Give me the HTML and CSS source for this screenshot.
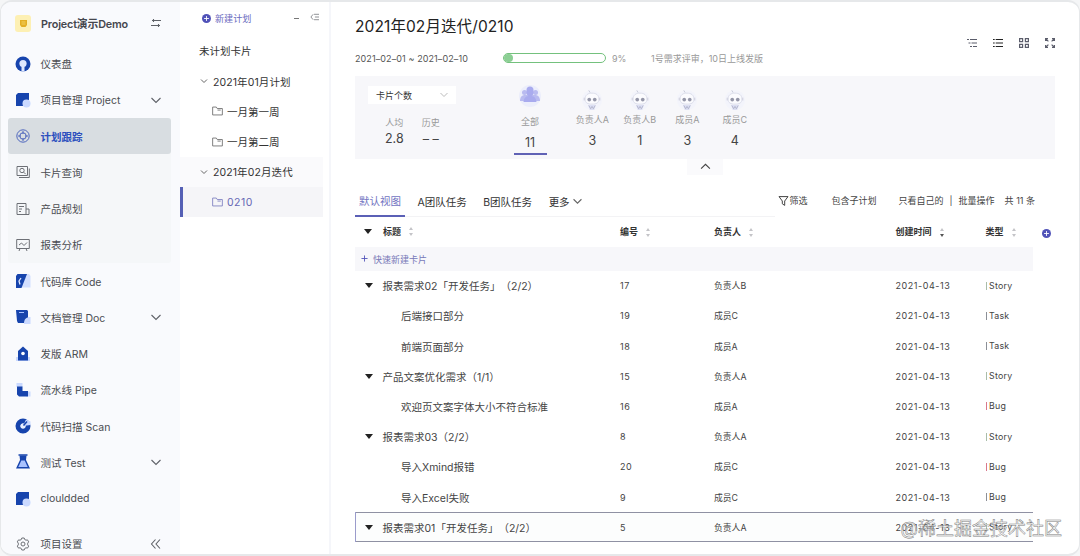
FILE: index.html
```html
<!DOCTYPE html>
<html lang="zh-CN">
<head>
    <meta charset="UTF-8">
    <meta name="viewport" content="width=device-width, initial-scale=1.0">
    <title>Project演示Demo</title>
    <link rel="stylesheet" href="styles.css">
</head>
<body>
    <div class="app">
        <aside class="sidebar">
            <div class="project">
                <span class="project-logo"><svg width="7" height="7" viewBox="0 0 7 7"><path d="M0 0h7v5L5.500 7h-4L0 5z" fill="#e3ae22"/><path d="M1.500 2h4M1.500 4h4" stroke="#f8db70" stroke-width=".8"/></svg></span>
                <span class="grow">Project演示Demo</span>
                <svg class="arrow" viewBox="0 0 12 12"><path d="M11 3.500H2M3.500 2v3M1 8.500h9M8.500 7v3"/></svg>
            </div>
            <nav>
                <a class="item">
                    <svg class="icon" viewBox="0 0 16 16"><circle cx="8" cy="8" r="7.500" fill="#1744ad"/><circle cx="8" cy="7.500" r="3.600" fill="#dfe8ff"/><path d="M6.500 8h3v7.500h-3z" fill="#dfe8ff"/></svg>
                    <span class="grow">仪表盘</span>
                </a>
                <a class="item">
                    <svg class="icon" viewBox="0 0 16 16"><path d="M3 1h11v13H1V3z" fill="#1744ad"/><circle cx="11.500" cy="11.500" r="4" fill="#cad9ff"/></svg>
                    <span class="grow">项目管理 Project</span>
                    <svg class="arrow" viewBox="0 0 12 12"><path d="M1.500 4L6 8.500 10.500 4"/></svg>
                </a>
                <div class="submenu">
                    <a class="item active">
                        <svg class="icon line" viewBox="0 0 16 16"><circle cx="8" cy="8" r="6.200"/><circle cx="8" cy="8" r="3.200"/><path d="M8 3v3M8 10v3M3 8h3M10 8h3"/></svg>
                        <span class="grow">计划跟踪</span>
                    </a>
                    <a class="item">
                        <svg class="icon line" viewBox="0 0 16 16"><path d="M2 2.500h10.500v9H2zM4 13.500h10.300V4.500"/><circle cx="7" cy="6.500" r="2.200"/><path d="M8.700 8.200l2 2"/></svg>
                        <span class="grow">卡片查询</span>
                    </a>
                    <a class="item">
                        <svg class="icon line" viewBox="0 0 16 16"><path d="M2 2.500h9v11H2zM11 8h3v5.500h-3M4 5.500h5M4 8h3M4 10.500h2"/></svg>
                        <span class="grow">产品规划</span>
                    </a>
                    <a class="item">
                        <svg class="icon line" viewBox="0 0 16 16"><path d="M1.700 2.500h12.600v9H1.700zM4 8l2.500-2 2.500 2.500L12 5.500M5 11.500l-1 2.500M11 11.500l1 2.500"/></svg>
                        <span class="grow">报表分析</span>
                    </a>
                </div>
                <a class="item">
                    <svg class="icon" viewBox="0 0 16 16"><path d="M9 1h5l1.500 2v11.500H5z" fill="#d3dfff"/><path d="M2.500 1H12L6.500 15H1V3z" fill="#1744ad"/><path d="M6 5L4 8l1 3.500" fill="none" stroke="#dfe8ff" stroke-width="1.300"/></svg>
                    <span class="grow">代码库 Code</span>
                </a>
                <a class="item">
                    <svg class="icon" viewBox="0 0 16 16"><path d="M1 1h11l1 1v8l-4 4H3l-1-2z" fill="#1744ad"/><path d="M4 3.500h5" stroke="#a9c2ff"/><path d="M9 15c0-5 2-7 6.500-7v7z" fill="#cad9ff"/></svg>
                    <span class="grow">文档管理 Doc</span>
                    <svg class="arrow" viewBox="0 0 12 12"><path d="M1.500 4L6 8.500 10.500 4"/></svg>
                </a>
                <a class="item">
                    <svg class="icon" viewBox="0 0 16 16"><path d="M1 11h14v4H1z" fill="#cad9ff"/><path d="M8 .5l5 4.500v9.500H3V5z" fill="#1744ad"/><circle cx="8" cy="7.500" r="1.800" fill="#fff"/></svg>
                    <span class="grow">发版 ARM</span>
                </a>
                <a class="item">
                    <svg class="icon" viewBox="0 0 16 16"><path d="M1.500 1h6v4h-6zM11 9.500h4.500v5H11z" fill="#cad9ff"/><path d="M2 4.500h5.500V9H13v5.500H4l-2-2z" fill="#1744ad"/></svg>
                    <span class="grow">流水线 Pipe</span>
                </a>
                <a class="item">
                    <svg class="icon" viewBox="0 0 16 16"><circle cx="8" cy="8" r="5" fill="none" stroke="#1744ad" stroke-width="5"/><circle cx="8" cy="8" r="2.500" fill="#e8efff"/><path d="M8 8l3-6.500 4.500 2v3.500z" fill="#cad9ff"/><path d="M8.500 7.500l3.500-4" stroke="#1744ad" stroke-width="1.500"/></svg>
                    <span class="grow">代码扫描 Scan</span>
                </a>
                <a class="item">
                    <svg class="icon" viewBox="0 0 16 16"><path d="M4.500 1.500h7L11 6l4 8.500H1L5 6z" fill="#1744ad"/><path d="M6.300 6.500h3.400l3 6.500H3.300z" fill="#a9c2ff"/><path d="M3.500 1h9" stroke="#1744ad" stroke-width="1.500"/></svg>
                    <span class="grow">测试 Test</span>
                    <svg class="arrow" viewBox="0 0 12 12"><path d="M1.500 4L6 8.500 10.500 4"/></svg>
                </a>
                <a class="item">
                    <svg class="icon" viewBox="0 0 16 16"><path d="M3 1h11v13H1V3z" fill="#1744ad"/><circle cx="11.500" cy="11.500" r="4" fill="#cad9ff"/></svg>
                    <span class="grow">clouldded</span>
                </a>
            </nav>
            <div class="item settings">
                <svg class="icon line" viewBox="0 0 16 16"><path d="M6.800 2h2.400l.5 1.500 1.300.7 1.500-.3 1.200 2-1 1.200v1.800l1 1.200-1.200 2-1.500-.3-1.300.7-.5 1.500H6.800l-.5-1.500-1.300-.7-1.500.3-1.200-2 1-1.200V7.100l-1-1.200 1.200-2 1.500.3 1.300-.7z"/><circle cx="8" cy="8" r="2"/></svg>
                <span class="grow">项目设置</span>
                <svg class="arrow" viewBox="0 0 12 12"><path d="M5.500 1.500L1.500 6l4 4.500M10 1.500L6 6l4 4.500"/></svg>
            </div>
        </aside>

        <section class="plans">
            <div class="plans-head">
                <svg class="plus" viewBox="0 0 10 10"><circle cx="5" cy="5" r="5"/><path d="M5 2.300v5.400M2.300 5h5.400"/></svg>
                <span class="grow">新建计划</span>
                <span class="minus"></span>
                <svg class="fold" viewBox="0 0 10 8"><path d="M3.500 1L1 4l2.500 3M4.500 1H10M5.500 4H10M4.500 7H10"/></svg>
            </div>
            <div class="plan root">未计划卡片</div>
            <div class="plan">
                <svg class="caret" viewBox="0 0 8 8"><path d="M1 2.500l3 3 3-3"/></svg>2021年01月计划
            </div>
            <div class="plan child">
                <svg class="folder" viewBox="0 0 12 10"><path d="M.7.700h4l1 1.600h5.600v7H.7zM6 4h3.500"/></svg>一月第一周
            </div>
            <div class="plan child">
                <svg class="folder" viewBox="0 0 12 10"><path d="M.7.700h4l1 1.600h5.600v7H.7zM6 4h3.500"/></svg>一月第二周
            </div>
            <div class="plan open">
                <svg class="caret" viewBox="0 0 8 8"><path d="M1 2.500l3 3 3-3"/></svg>2021年02月迭代
            </div>
            <div class="plan child selected">
                <svg class="folder" viewBox="0 0 12 10"><path d="M.7.700h4l1 1.600h5.600v7H.7zM6 4h3.500"/></svg>0210
            </div>
        </section>

        <main class="main">
            <header class="top">
                <div>
                    <h1>2021年02月迭代/0210</h1>
                    <div class="meta">
                        <span class="dates">2021–02–01 ~ 2021–02–10</span>
                        <span class="progress"><span class="bar" style="width: 9%"></span></span>
                        <span class="percent">9%</span>
                        <span class="note">1号需求评审，10日上线发版</span>
                    </div>
                </div>
                <div class="views">
                    <svg viewBox="0 0 10 10"><path d="M0 1.500h2M3 1.500h7M1.500 5h2M4.500 5H10M3 8.500h2M6 8.500h4"/></svg>
                    <svg class="dark" viewBox="0 0 10 10"><path d="M0 1.500h1.700M2.700 1.500H10M0 5h1.700M2.700 5H10M0 8.500h1.700M2.700 8.500H10"/></svg>
                    <svg viewBox="0 0 10 10"><path d="M.6.600h3v3h-3zM6.400.600h3v3h-3zM.6 6.400h3v3h-3zM6.400 6.400h3v3h-3z"/></svg>
                    <svg viewBox="0 0 10 10"><path d="M.6 3V.6H3M.8.800l2.600 2.600M7 .6h2.400V3M9.200.800L6.600 3.400M.6 7v2.400H3M.8 9.200l2.600-2.600M7 9.400h2.400V7M9.200 9.200L6.600 6.600"/></svg>
                </div>
            </header>

            <section class="stats">
                <div class="summary">
                    <div class="select">卡片个数<svg class="caret" viewBox="0 0 8 8"><path d="M.5 2L4 5.500 7.500 2"/></svg></div>
                    <div class="averages">
                        <div><span>人均</span><b>2.8</b></div>
                        <div><span>历史</span><b>– –</b></div>
                    </div>
                </div>
                <div class="member all">
                    <svg viewBox="0 0 24 24"><circle cx="12" cy="12" r="11" fill="#eceefb"/><g fill="#b9bbf0"><circle cx="6.500" cy="8.500" r="2.500"/><circle cx="17.500" cy="8.500" r="2.500"/><path d="M2 17c0-4 2-6 5-6h10c3 0 5 2 5 6z"/></g><path d="M8.500 6a3.500 3.500 0 0 1 7 0v3a3.500 3.500 0 0 1-2 3c3 .5 4.500 2 5 6h-13c.5-4 2-5.500 5-6a3.500 3.500 0 0 1-2-3z" fill="#a9abee"/></svg>
                    <span>全部</span><b>11</b>
                </div>
                <div class="member">
                    <svg viewBox="0 0 24 24"><use href="#robot"/></svg>
                    <span>负责人A</span><b>3</b>
                </div>
                <div class="member">
                    <svg viewBox="0 0 24 24"><use href="#robot"/></svg>
                    <span>负责人B</span><b>1</b>
                </div>
                <div class="member">
                    <svg viewBox="0 0 24 24"><use href="#robot"/></svg>
                    <span>成员A</span><b>3</b>
                </div>
                <div class="member">
                    <svg viewBox="0 0 24 24"><use href="#robot"/></svg>
                    <span>成员C</span><b>4</b>
                </div>
            </section>
            <div class="collapse"><svg viewBox="0 0 10 10"><path d="M1 7l4-4 4 4"/></svg></div>

            <div class="toolbar">
                <div class="tabs">
                    <a class="tab current">默认视图</a>
                    <a class="tab">A团队任务</a>
                    <a class="tab">B团队任务</a>
                    <a class="tab">更多<svg class="caret" viewBox="0 0 8 8"><path d="M.5 2L4 5.500 7.500 2"/></svg></a>
                </div>
                <div class="actions">
                    <span class="filter"><svg viewBox="0 0 10 10"><path d="M.5.600h9L6.200 5v4.400L3.800 7.800V5z"/></svg>筛选</span>
                    <span class="include">包含子计划</span>
                    <span class="mine">只看自己的</span>
                    <span class="split">|</span>
                    <span>批量操作</span>
                    <span class="total">共 11 条</span>
                </div>
            </div>

            <div class="table">
                <div class="row head">
                    <div class="title"><i class="tri"></i>标题<i class="sort"></i></div>
                    <div>编号<i class="sort"></i></div>
                    <div>负责人<i class="sort"></i></div>
                    <div>创建时间<i class="sort desc"></i></div>
                    <div>类型<i class="sort"></i></div>
                    <svg class="plus" viewBox="0 0 10 10"><circle cx="5" cy="5" r="5"/><path d="M5 2.300v5.400M2.300 5h5.400"/></svg>
                </div>
                <div class="quick"><svg viewBox="0 0 8 8"><path d="M4 .5v7M.5 4h7"/></svg>快速新建卡片</div>
                <div class="row">
                    <div class="title"><i class="tri"></i>报表需求02「开发任务」（2/2）</div>
                    <div class="num">17</div><div>负责人B</div><div class="date">2021-04-13</div><div class="type story">Story</div>
                </div>
                <div class="row">
                    <div class="title sub">后端接口部分</div>
                    <div class="num">19</div><div>成员C</div><div class="date">2021-04-13</div><div class="type task">Task</div>
                </div>
                <div class="row">
                    <div class="title sub">前端页面部分</div>
                    <div class="num">18</div><div>成员A</div><div class="date">2021-04-13</div><div class="type task">Task</div>
                </div>
                <div class="row">
                    <div class="title"><i class="tri"></i>产品文案优化需求（1/1）</div>
                    <div class="num">15</div><div>负责人A</div><div class="date">2021-04-13</div><div class="type story">Story</div>
                </div>
                <div class="row">
                    <div class="title sub">欢迎页文案字体大小不符合标准</div>
                    <div class="num">16</div><div>成员A</div><div class="date">2021-04-13</div><div class="type bug">Bug</div>
                </div>
                <div class="row">
                    <div class="title"><i class="tri"></i>报表需求03（2/2）</div>
                    <div class="num">8</div><div>负责人A</div><div class="date">2021-04-13</div><div class="type story">Story</div>
                </div>
                <div class="row">
                    <div class="title sub">导入Xmind报错</div>
                    <div class="num">20</div><div>成员C</div><div class="date">2021-04-13</div><div class="type bug">Bug</div>
                </div>
                <div class="row">
                    <div class="title sub">导入Excel失败</div>
                    <div class="num">9</div><div>成员C</div><div class="date">2021-04-13</div><div class="type task">Bug</div>
                </div>
                <div class="row focused">
                    <div class="title"><i class="tri"></i>报表需求01「开发任务」（2/2）</div>
                    <div class="num">5</div><div>负责人A</div><div class="date">2021-04-13</div><div class="type story">Story</div>
                </div>
            </div>
        </main>
        <div class="watermark">@稀土掘金技术社区</div>
    </div>

    <svg class="defs" width="0" height="0">
        <symbol id="robot" viewBox="0 0 24 24">
            <circle cx="12" cy="12" r="11" fill="#f3f4fb"/>
            <path d="M10 4L8.500 1.500" stroke="#c5c8d8"/>
            <path d="M4.500 11c0-4.500 3-6.500 7.500-6.500s7.500 2 7.500 6.500-3 5.500-7.500 5.500-7.500-1-7.500-5.500z" fill="#fbfbfe" stroke="#dadce9"/>
            <path d="M3.500 9.500v3M20.500 9.500v3" stroke="#c9cbd9"/>
            <circle cx="9" cy="11.500" r="2" fill="#9496a8"/><circle cx="15" cy="11.500" r="2" fill="#9496a8"/>
            <path d="M8 17.500h8l-1.500 5.500h-5z" fill="#dcdff3"/><path d="M8.500 18l2 3.500L12 19l1.500 2.500 2-3.500" fill="none" stroke="#b1b4ca"/>
        </symbol>
    </svg>
</body>
</html>
```
FILE: styles.css
```css
* {
    box-sizing: border-box;
}

body {
    margin: 0;
    background-color: #f5f6f7;
    color: #333;
    font-family: Inter, "Noto Sans CJK SC", sans-serif;
    font-size: 10.5px;
    text-spacing-trim: space-all;
}

svg {
    flex: none;
    fill: none;
}

.grow {
    flex: 1;
}

.app {
    position: relative;
    display: flex;
    height: 556px;
    border: 1px solid #e6e8ea;
    border-width: 2px 1px;
    border-radius: 12px;
    background: white;
    overflow: hidden;
    white-space: nowrap;
}

/* sidebar */
.sidebar {
    width: 179px;
    padding: 0 9px 0 7px;
    background: #f9fafd;
    display: flex;
    flex-direction: column;
}

.project, .item {
    display: flex;
    flex-shrink: 0;
    align-items: center;
    height: 36.25px;
    padding: 0 9px 0 7px;
    color: #4b4d52;
}

.project {
    height: 43.5px;
    padding-bottom: 1px;
    font-size: 10.8px;
    font-weight: 600;
    letter-spacing: -.15px;
    color: #45474e;
}

.project-logo {
    display: flex;
    align-items: center;
    justify-content: center;
    width: 16px;
    height: 17px;
    margin-right: 10px;
    border-radius: 3px;
    background: #fdf0b4;
}

.icon {
    width: 16px;
    height: 16px;
    margin: 0 10px 0 -.5px;
}

.icon.line {
    stroke: #6d7076;
    stroke-width: 1;
}

.arrow {
    width: 12px;
    height: 12px;
    stroke: #5f6268;
    stroke-width: 1.1;
}

.submenu {
    background: #f5f7f9;
    border-radius: 3px;
}

.item.active {
    background: #d8dde1;
    border-radius: 3px;
    color: #2b4fbe;
    font-weight: 700;
}

.item.active .icon {
    stroke: #4f67bd;
}

.settings {
    margin-top: 9px;
}

/* plan tree */
.plans {
    width: 151px;
    padding-right: 6px;
    border-right: 2px solid #f5f6fa;
    font-size: 10.5px;
}

.plans-head {
    display: flex;
    align-items: center;
    height: 32px;
    padding: 0 4px 0 22px;
    font-size: 9.1px;
    color: #6b6cc0;
}

.plus {
    width: 9px;
    height: 9px;
    margin-right: 4px;
}

.plus circle {
    fill: #5052b8;
}

.plus path {
    stroke: white;
}

.minus {
    width: 5px;
    height: 1px;
    margin: 0 11px 0 0;
    background: #777;
}

.fold {
    width: 9px;
    height: 8px;
    margin-bottom: 2px;
    stroke: #77797e;
    stroke-width: .9;
}

.plan {
    display: flex;
    align-items: center;
    height: 30.25px;
    padding-left: 20px;
    letter-spacing: .1px;
}

.plan.root {
    height: 32px;
    padding-left: 19px;
    letter-spacing: 0;
}

.caret {
    width: 8px;
    height: 8px;
    margin-right: 5px;
    stroke: #666;
}

.plan.child {
    padding-left: 32px;
    letter-spacing: 0;
}

.folder {
    width: 11px;
    height: 10px;
    margin-right: 4px;
    stroke: #666;
    stroke-width: .9;
}

.plan.open {
    background: #fafafc;
}

.plan.selected {
    padding-left: 29px;
    border-left: 3px solid #5560b5;
    background: #f5f5f8;
    color: #6668b5;
    letter-spacing: .5px;
}

.selected .folder {
    stroke: #7779bd;
}

/* main */
.main {
    flex: 1;
    padding: 0 24px;
}

.top {
    display: flex;
    justify-content: space-between;
    height: 74px;
}

h1 {
    margin: 12.5px 0 0;
    font-size: 15.5px;
    font-weight: 400;
    line-height: 24px;
    letter-spacing: .1px;
    color: #222;
}

.meta {
    display: flex;
    align-items: center;
    height: 14px;
    margin-top: 12.5px;
    font-size: 9px;
    color: #999;
}

.dates {
    width: 148px;
    letter-spacing: .1px;
    color: #555;
}

.progress {
    display: flex;
    width: 103px;
    height: 10px;
    border: 1px solid #74c17d;
    border-radius: 5px;
}

.bar {
    height: 8px;
    border-radius: 5px;
    background: #8ccf94;
}

.percent {
    width: 45px;
    padding-left: 6px;
}

.views {
    display: flex;
    gap: 16px;
    padding: 35.5px 0 0;
}

.views svg {
    width: 10px;
    height: 10px;
    stroke: #5b5d6b;
    stroke-width: 1.2;
}

.views .dark {
    stroke: #222;
}

.stats {
    display: flex;
    height: 83px;
    background: #f7f7fa;
}

.summary {
    width: 151px;
    padding: 10px 0 0 13px;
}

.select {
    display: flex;
    align-items: center;
    justify-content: space-between;
    width: 88px;
    height: 18px;
    padding: 0 3px 0 8px;
    background: white;
    font-size: 9px;
}

.select .caret {
    stroke: #bbb;
}

.averages {
    display: flex;
    gap: 18px;
    padding: 10.5px 0 0 17px;
}

.averages div, .member {
    display: flex;
    flex-direction: column;
    align-items: center;
    font-size: 9px;
    line-height: 16px;
    color: #999;
}

.averages b, .member b {
    font-size: 12.5px;
    font-weight: 400;
    color: #444;
}

.member {
    width: 47.5px;
    padding-top: 12px;
}

.member svg {
    width: 22px;
    height: 24px;
}

.member b {
    margin-top: 5px;
}

.member.all {
    width: 33px;
    height: 79px;
    margin: 0 22px 0 7.5px;
    padding-top: 8px;
    border-bottom: 2px solid #6062b5;
}

.all svg {
    width: 24px;
    height: 24px;
    margin-bottom: 6px;
}

.collapse {
    display: flex;
    align-items: center;
    justify-content: center;
    width: 36px;
    height: 16px;
    margin: 0 auto;
    background: #fafafc;
}

.collapse svg {
    width: 11px;
    height: 11px;
    margin-bottom: 2px;
    stroke: #444;
}

.toolbar {
    display: flex;
    justify-content: space-between;
    height: 42px;
    padding-top: 11px;
}

.tabs {
    display: flex;
    width: 420px;
    gap: 16.5px;
    border-bottom: 1px solid #f3f3f5;
}

.tab {
    display: flex;
    align-items: center;
    height: 31px;
}

.tab .caret {
    width: 9px;
    height: 9px;
    margin: 0 0 0 3px;
}

.tab.current {
    width: 50px;
    margin-right: -4px;
    justify-content: center;
    border-bottom: 2px solid #5b60b6;
    color: #7274c2;
}

.actions {
    display: flex;
    align-items: center;
    height: 29px;
    padding-right: 20px;
    font-size: 9px;
    color: #444;
}

.filter svg {
    width: 11px;
    height: 10px;
    margin-right: 1px;
    vertical-align: -2px;
    stroke: #444;
}

.include {
    margin: 0 22px 0 24px;
}

.split {
    margin: 0 6px;
}

.total {
    margin-left: 10px;
}

/* table */
.row {
    display: grid;
    grid-template-columns: 265px 94px 181.500px 90px 47px;
    align-items: center;
    width: 678px;
    height: 30.2px;
    font-size: 8.8px;
    color: #444;
}

.row.head {
    grid-template-columns: 265px 94px 181.500px 90px 56px 9px;
    width: 700px;
    height: 29.6px;
    padding-bottom: 1px;
    font-size: 9px;
    font-weight: 600;
    color: #333;
}

.row.head .plus {
    margin-top: 4px;
}

.row .title {
    display: flex;
    align-items: center;
    padding-left: 10px;
    font-size: 10.5px;
}

.row.head .title {
    padding-left: 9px;
    font-size: 9px;
}

.row .title.sub {
    padding-left: 46px;
}

.tri {
    width: 0;
    height: 0;
    margin-right: 9.5px;
    border: 4.5px solid transparent;
    border-top: 5px solid #222;
    border-bottom: 0;
}

.head .tri {
    margin-right: 11px;
}

/* up and down sort arrows */
.sort {
    display: inline-flex;
    flex-direction: column;
    gap: 3px;
    margin-left: 8px;
    vertical-align: middle;
}

.sort::before, .sort::after {
    content: "";
    border: 2.5px solid transparent;
    border-bottom: 3px solid #c4c4c8;
    border-top: 0;
}

.sort::after {
    border-top: 3px solid #c4c4c8;
    border-bottom: 0;
}

.sort.desc::after {
    border-top-color: #555;
}

.quick {
    display: flex;
    align-items: center;
    width: 678px;
    height: 24px;
    padding: 2px 0 0 6px;
    background: #f7f7fa;
    font-size: 9px;
    color: #7779b8;
}

.quick svg {
    width: 7px;
    height: 7px;
    margin: 0 5px 2px 0;
    stroke: #5052b8;
}

.num {
    font-size: 9px;
    letter-spacing: .5px;
}

.date {
    font-size: 9px;
    letter-spacing: .55px;
}

.type {
    padding-bottom: 1px;
    letter-spacing: .25px;
}

.type::before {
    content: "";
    display: inline-block;
    width: 1px;
    height: 8px;
    margin-right: 2.5px;
    vertical-align: -1px;
    background: #a9bda9;
}

.type.task::before {
    background: #8c8f96;
}

.type.bug::before {
    background: #d9788d;
}

.row.focused {
    background: #fcfdfd;
    box-shadow: inset 1px 0 #9a9bcb, inset 0 1px #8f91a3, inset 0 -1px #8f91a3;
}

.watermark {
    position: absolute;
    right: 17px;
    bottom: 12px;
    font-size: 18px;
    line-height: 26px;
    color: rgba(255, 255, 255, .6);
    -webkit-text-stroke: .5px #7d7d7d;
}

.defs {
    position: absolute;
}
```
